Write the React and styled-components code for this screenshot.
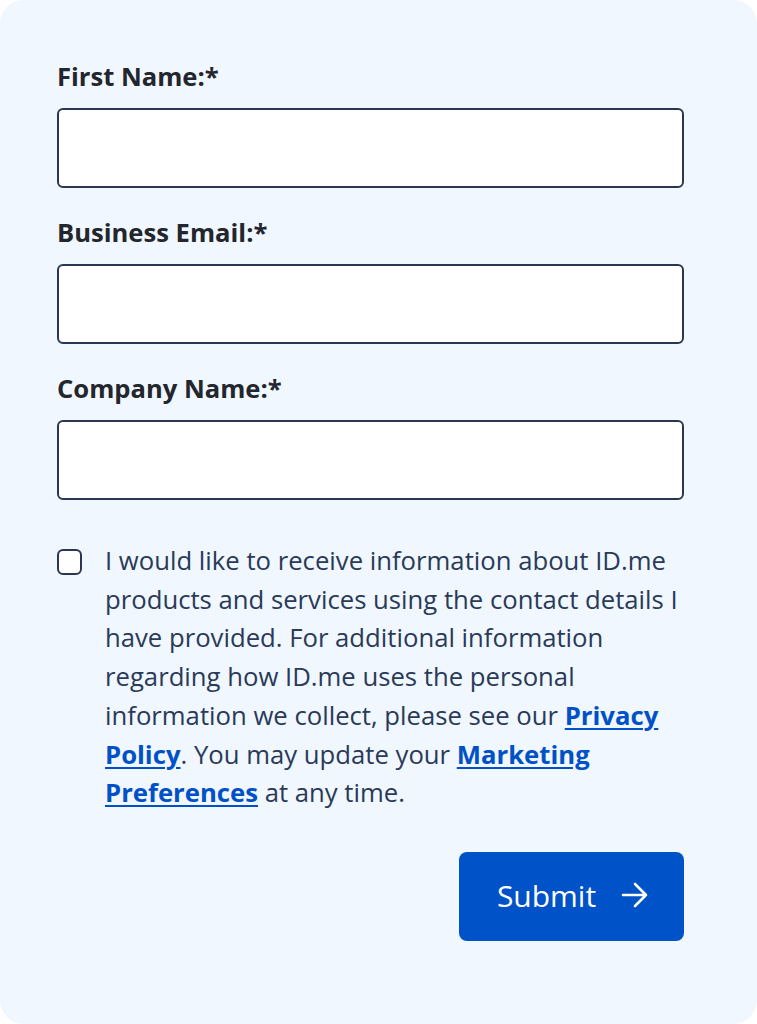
import styled, { createGlobalStyle } from "styled-components";

const GlobalStyle = createGlobalStyle`
  body {
    margin: 0;
    background: #ffffff;
    font-family: "Open Sans", "Noto Sans", sans-serif;
  }
`;

const Card = styled.div`
  width: 757px;
  height: 1024px;
  box-sizing: border-box;
  background-color: #f0f7fe;
  border-radius: 24px;
  padding: 61px 73px 0 57px;
`;

const Form = styled.form`
  display: flex;
  flex-direction: column;
`;

const Field = styled.div`
  display: flex;
  flex-direction: column;
  margin-bottom: 29px;
`;

const Label = styled.label`
  font-size: 25.6px;
  line-height: 32px;
  font-weight: 700;
  color: #23262d;
  margin-bottom: 15px;
`;

const Input = styled.input`
  height: 80px;
  box-sizing: border-box;
  border: 2px solid #2b3752;
  border-radius: 6px;
  background: #ffffff;
  padding: 0 16px;
  font-size: 22px;
  font-family: inherit;
`;

const Consent = styled.div`
  display: flex;
  align-items: flex-start;
  gap: 23px;
  margin-top: 13px;
`;

const Checkbox = styled.span`
  flex: none;
  width: 25px;
  height: 26px;
  box-sizing: border-box;
  border: 2px solid #2b3752;
  border-radius: 6px;
  background: #ffffff;
  margin-top: 7px;
`;

const ConsentText = styled.p`
  margin: 0;
  font-size: 25.7px;
  line-height: 38.7px;
  color: #2a3a58;
`;

const Link = styled.a`
  color: #0050c8;
  font-weight: 700;
  text-decoration: underline;
  text-decoration-thickness: 2px;
  text-underline-offset: 3px;
`;

const Actions = styled.div`
  display: flex;
  justify-content: flex-end;
  margin-top: 39px;
`;

const Button = styled.button`
  width: 225px;
  height: 89px;
  border: none;
  border-radius: 8px;
  background-color: #0052c8;
  color: #ffffff;
  font-family: inherit;
  font-size: 30px;
  font-weight: 500;
  display: flex;
  align-items: center;
  justify-content: center;
  gap: 25px;
  padding: 0 0 2px 3px;
  cursor: pointer;
`;

const Arrow = () => (
  <svg width="28" height="28" viewBox="0 0 28 28" fill="none">
    <path
      d="M2 14h23M14 3l11 11-11 11"
      stroke="#ffffff"
      strokeWidth="2.6"
      strokeLinecap="round"
      strokeLinejoin="round"
    />
  </svg>
);

const App = () => {
  return (
    <>
      <GlobalStyle />
      <Card>
        <Form onSubmit={(e) => e.preventDefault()}>
          <Field>
            <Label>First Name:*</Label>
            <Input name="firstName" />
          </Field>
          <Field>
            <Label>Business Email:*</Label>
            <Input name="email" />
          </Field>
          <Field>
            <Label>Company Name:*</Label>
            <Input name="company" />
          </Field>

          <Consent>
            <Checkbox />
            <ConsentText>
              I would like to receive information about ID.me products and
              services using the contact details I have provided. For
              additional information regarding how ID.me uses the personal
              information we collect, please see our{" "}
              <Link href="#">Privacy Policy</Link>. You may update your{" "}
              <Link href="#">Marketing Preferences</Link> at any time.
            </ConsentText>
          </Consent>

          <Actions>
            <Button type="submit">
              Submit
              <Arrow />
            </Button>
          </Actions>
        </Form>
      </Card>
    </>
  );
};

export default App;
